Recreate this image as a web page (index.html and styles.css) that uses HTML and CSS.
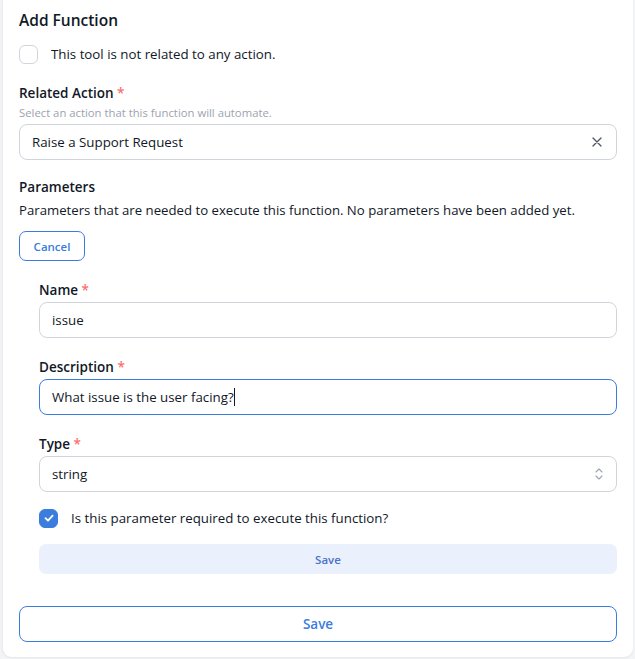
FILE: index.html
```html
<!DOCTYPE html>
<html lang="en">
<head>
    <meta charset="UTF-8">
    <meta name="viewport" content="width=device-width, initial-scale=1.0">
    <title>Add Function</title>
    <link rel="stylesheet" href="styles.css">
</head>
<body>
    <div class="card">
        <h2 class="title">Add Function</h2>

        <label class="check-row">
            <span class="box"></span>
            <span>This tool is not related to any action.</span>
        </label>

        <div class="field-label">Related Action <span class="req">*</span></div>
        <div class="helper">Select an action that this function will automate.</div>
        <div class="input">
            <span>Raise a Support Request</span>
            <svg class="clear" width="10" height="10" viewBox="0 0 10 10">
                <path d="M1 1 L9 9 M9 1 L1 9" stroke="#4b5563" stroke-width="1.3" fill="none" stroke-linecap="round"/>
            </svg>
        </div>

        <div class="field-label params">Parameters</div>
        <div class="desc">Parameters that are needed to execute this function. No parameters have been added yet.</div>
        <div><button class="btn-outline small">Cancel</button></div>

        <!-- new parameter form -->
        <div class="param-form">
            <div class="field-label">Name <span class="req">*</span></div>
            <div class="input"><span>issue</span></div>

            <div class="field-label">Description <span class="req">*</span></div>
            <div class="input focused"><span>What issue is the user facing?</span><span class="caret"></span></div>

            <div class="field-label">Type <span class="req">*</span></div>
            <div class="input">
                <span>string</span>
                <svg class="chevrons" width="8" height="12" viewBox="0 0 8 12">
                    <path d="M1 4 L4 1 L7 4 M1 8 L4 11 L7 8" stroke="#9ca3af" stroke-width="1.1" fill="none" stroke-linecap="round" stroke-linejoin="round"/>
                </svg>
            </div>

            <label class="check-row required">
                <span class="box checked">
                    <svg width="12" height="12" viewBox="0 0 12 12">
                        <path d="M2.5 6.2 L5 8.6 L9.6 3.6" stroke="#fff" stroke-width="1.8" fill="none" stroke-linecap="round" stroke-linejoin="round"/>
                    </svg>
                </span>
                <span>Is this parameter required to execute this function?</span>
            </label>

            <button class="btn-soft">Save</button>
        </div>

        <button class="btn-outline big">Save</button>
    </div>
</body>
</html>
```

FILE: styles.css
```css
body {
    margin: 0;
    padding: 0;
    background: #f3f4f6;
    font-family: "Segoe UI", "Open Sans", Arial, sans-serif;
    font-size: 13px;
    color: #111827;
}
.card {
    background: #fff;
    margin: 0 2px 2px 2px;
    border-left: 1px solid #ececee;
    border-radius: 0 0 9px 9px;
    box-shadow: 0 1px 2px rgba(0, 0, 0, 0.06);
    padding: 8px 16px 15px 16px;
    display: flex;
    flex-direction: column;
}
.title {
    margin: 0;
    font-size: 15.5px;
    font-weight: 600;
    line-height: 24px;
}
.check-row {
    display: flex;
    align-items: center;
    gap: 13px;
    height: 20px;
    margin-top: 12px;
    font-size: 13.3px;
}
.box {
    width: 17px;
    height: 17px;
    border: 1px solid #d1d5db;
    border-radius: 6px;
    display: flex;
    align-items: center;
    justify-content: center;
}
.box.checked {
    background: #3b7ddd;
    border-color: #3b7ddd;
}
.field-label {
    margin-top: 19px;
    font-weight: 600;
    font-size: 13.5px;
    line-height: 20px;
}
.req {
    color: #f87171;
}
.helper {
    margin-top: 1px;
    font-size: 11.3px;
    line-height: 18px;
    color: #9ca3af;
}
.input {
    margin-top: 2px;
    height: 34px;
    border: 1px solid #d1d5db;
    border-radius: 8px;
    display: flex;
    align-items: center;
    justify-content: space-between;
    padding: 0 13px 0 12px;
    font-size: 13.3px;
}
.input.focused {
    border-color: #3b7ddd;
    justify-content: flex-start;
}
.caret {
    width: 1px;
    height: 18px;
    background: #111827;
}
.clear {
    margin-right: 1px;
}
.field-label.params {
    margin-top: 17px;
}
.desc {
    margin-top: 3px;
    line-height: 20px;
    font-size: 13.2px;
}
.btn-outline {
    font-family: inherit;
    background: #fff;
    border: 1px solid #3b7ddd;
    color: #3b7ddd;
    cursor: pointer;
}
.btn-outline.small {
    margin-top: 11px;
    height: 30px;
    width: 66px;
    border-radius: 7px;
    font-size: 11.5px;
    font-weight: 600;
}
.param-form {
    margin-left: 20px;
    display: flex;
    flex-direction: column;
}
.check-row.required {
    margin-top: 16px;
}
.btn-soft {
    margin-top: 16px;
    height: 30px;
    border: none;
    border-radius: 7px;
    background: #eaf1fc;
    color: #4a72c9;
    font-family: inherit;
    font-size: 11.5px;
    font-weight: 600;
}
.btn-outline.big {
    margin-top: 32px;
    height: 36px;
    border-radius: 8px;
    font-size: 13.5px;
    font-weight: 600;
}
```
